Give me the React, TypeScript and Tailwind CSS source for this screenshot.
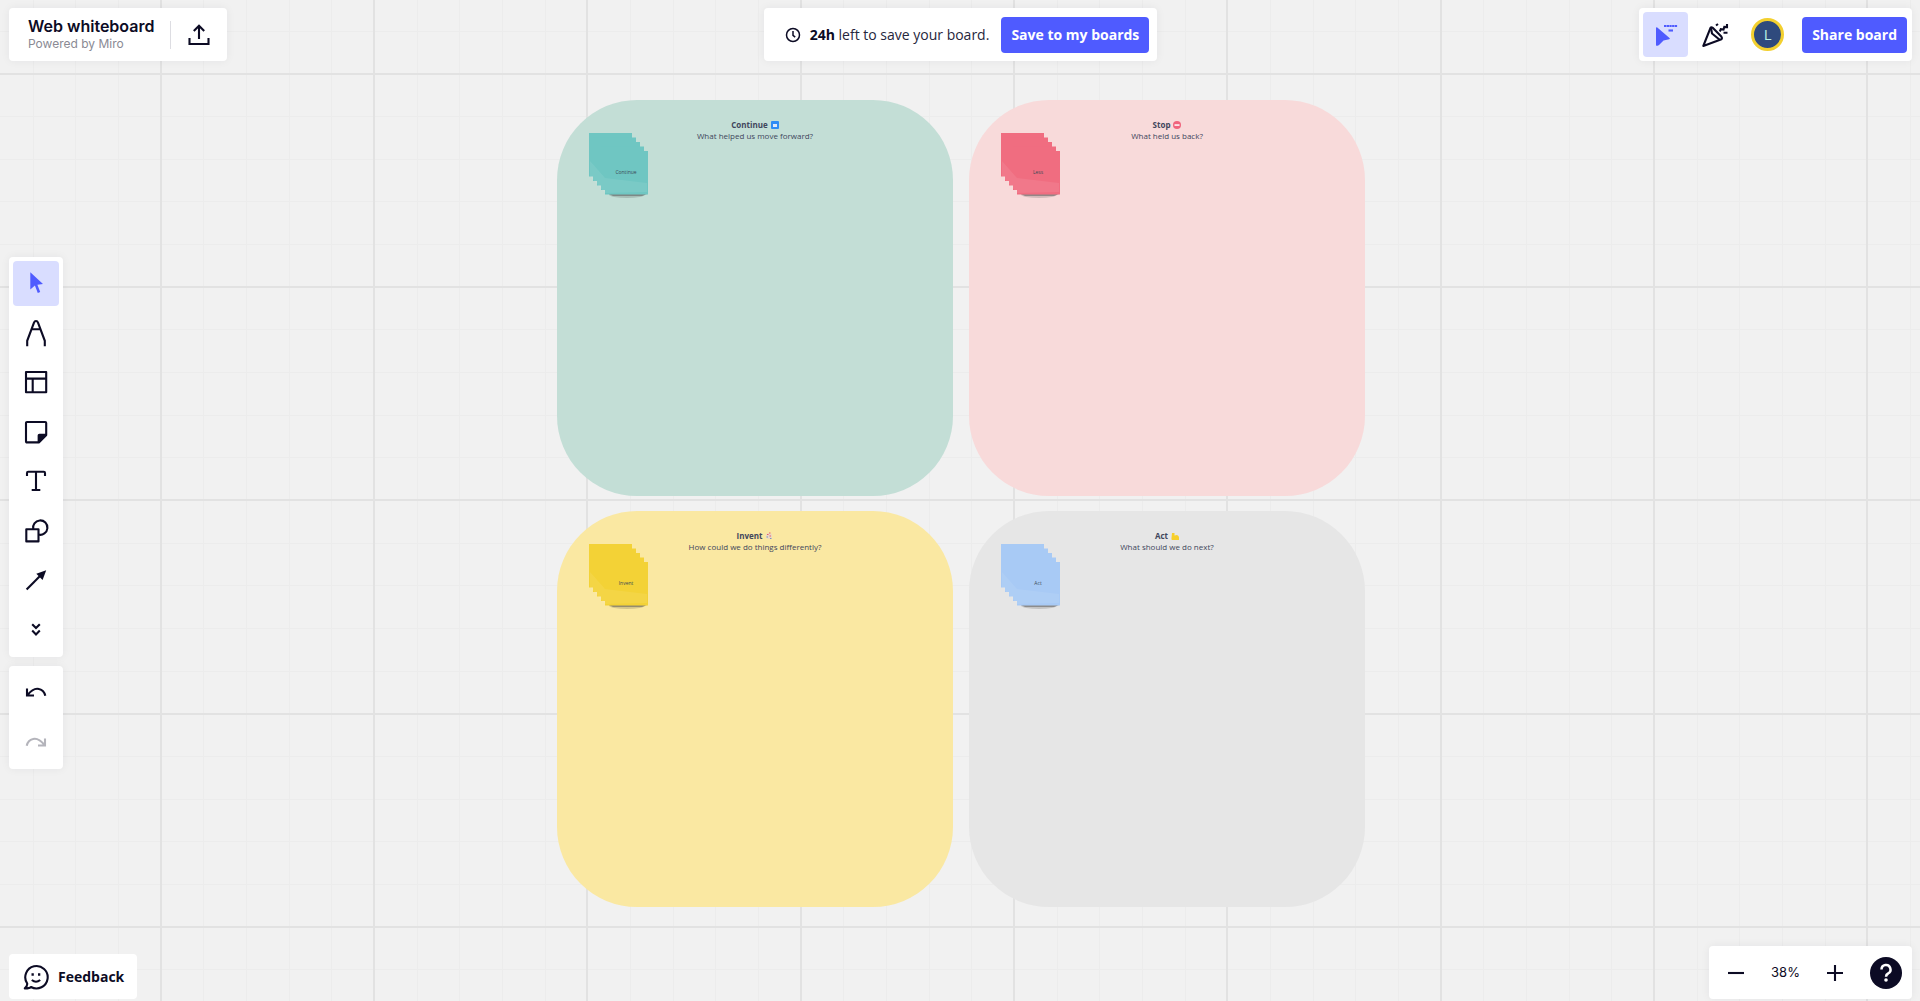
import type { ReactNode } from "react";

const GRID_STEP = 128 / 3;
const lines = Array.from({ length: 100 }, (_, i) => i);

function Grid() {
  return (
    <svg className="absolute inset-0 h-full w-full" aria-hidden="true">
      {/* Minor lines */}
      <g fill="#ececec">
        {lines.map((i) => (
          <rect key={`v${i}`} x={Math.floor(33 + i * GRID_STEP)} width="1" height="100%" />
        ))}
        {lines.map((i) => (
          <rect key={`h${i}`} y={Math.floor(31 + i * GRID_STEP)} width="100%" height="1" />
        ))}
      </g>
      {/* Major lines */}
      <g fill="#e2e2e2">
        {lines.map((i) => (
          <rect key={`v${i}`} x={Math.floor(160 + i * GRID_STEP * 5)} width="2" height="100%" />
        ))}
        {lines.map((i) => (
          <rect key={`h${i}`} y={Math.floor(73 + i * GRID_STEP * 5)} width="100%" height="2" />
        ))}
      </g>
    </svg>
  );
}

function Icon({ size = 28, children }: { size?: number; children: ReactNode }) {
  return (
    <svg
      width={size}
      height={size}
      viewBox={`0 0 ${size} ${size}`}
      fill="none"
      stroke="currentColor"
      strokeWidth="2.1"
      aria-hidden="true"
    >
      {children}
    </svg>
  );
}

const tools = [
  {
    name: "Select",
    icon: (
      <path
        d="M8.3 3.2 21 15l-5.6.8 2.8 7.2-2.4 1-2.9-7.4-4.6 4z"
        fill="currentColor"
        stroke="none"
      />
    ),
  },
  {
    name: "Pen",
    icon: (
      <path d="M5.2 27.2v-5.4L12 3.600q.6-1.600 2-1.600t2 1.600l6.800 18.200v5.400M10 10.200h8" />
    ),
  },
  {
    name: "Templates",
    icon: <path d="M4 4h20.2v20.2H4zM4 10.6h20.2M10.7 10.6v13.6" strokeLinejoin="round" />,
  },
  {
    name: "Sticky note",
    icon: (
      <>
        <path
          d="M5 4h18.2q1 0 1 1v12l-7.4 7.4H5q-1 0-1-1V5q0-1 1-1z"
          strokeLinejoin="round"
        />
        <path d="M15.6 25V17.6q0-1.8 1.8-1.8H25v1.6L17.4 25z" fill="currentColor" stroke="none" />
      </>
    ),
  },
  {
    name: "Text",
    icon: <path d="M5 9V6q0-1.2 1.2-1.2h15.6Q23 4.8 23 6v3M14 4.8V23M9.7 23h8.6" />,
  },
  {
    name: "Shapes",
    icon: (
      <>
        <path d="M4.3 12.2h12.2v12.2H4.3z" strokeLinejoin="round" />
        <path d="M11.2 12.2a7.2 7.2 0 1 1 5.3 5.4" />
      </>
    ),
  },
  {
    name: "Connection line",
    icon: (
      <>
        <path d="M4.6 23.5 18.5 9.6" />
        <path d="M24.2 4.2 20.6 14l-6.3-6.3z" fill="currentColor" stroke="none" />
      </>
    ),
  },
  {
    name: "More",
    icon: <path d="m10.2 8.2 3.8 3.8 3.8-3.8M10.2 14.6l3.8 3.8 3.8-3.800" />,
  },
];

const emojis = {
  forward: (
    <>
      <rect width="8" height="8" rx="1" fill="#2f8df5" />
      <path d="M2 3h4v3H2z" fill="#dfe9fb" />
    </>
  ),
  stop: (
    <>
      <circle cx="4" cy="4" r="4" fill="#f0647d" />
      <path d="M1.5 3.3h5v1.5h-5z" fill="#fff" />
    </>
  ),
  palette: (
    <>
      <circle cx="4" cy="4" r="3" fill="#ead9c4" />
      <path d="M2 2.5h1.5M4 1h1.5" stroke="#e85c6a" />
      <path d="M1.5 5H3M5 6.5h1.5" stroke="#7b93c4" />
      <path d="M4.5 4H6" stroke="#e85c6a" />
    </>
  ),
  muscle: <path d="M1 1h2.5v2.5L6 3q2 .5 2 2.500V8H1q-1-.5-.5-2z" fill="#f6cf2c" />,
};

type Section = {
  title: string;
  question: string;
  note: string;
  emoji: keyof typeof emojis;
  card: string;
  sticky: string;
};

const sections: Section[] = [
  {
    title: "Continue",
    question: "What helped us move forward?",
    note: "Continue",
    emoji: "forward",
    card: "bg-[#c3ded6]",
    sticky: "#6fc6c2",
  },
  {
    title: "Stop",
    question: "What held us back?",
    note: "Less",
    emoji: "stop",
    card: "bg-[#f8dada]",
    sticky: "#f06d80",
  },
  {
    title: "Invent",
    question: "How could we do things differently?",
    note: "Invent",
    emoji: "palette",
    card: "bg-[#fae8a2]",
    sticky: "#f3d236",
  },
  {
    title: "Act",
    question: "What should we do next?",
    note: "Act",
    emoji: "muscle",
    card: "bg-[#e6e6e6]",
    sticky: "#a8caf5",
  },
];

function StickyStack({ color, note }: { color: string; note: string }) {
  return (
    <div className="absolute top-[33px] left-8">
      <svg width="64" height="70" viewBox="0 0 64 70" aria-hidden="true">
        <ellipse cx="38" cy="61.5" rx="18" ry="3.5" fill="#000" opacity="0.15" />
        <path d="M20 61h38l-5 2H24z" fill="#555" opacity="0.5" />
        {[0, 1, 2, 3, 4].map((i) => (
          <rect key={i} x={i * 4} y={i * 4.5} width="43" height="43.5" fill={color} />
        ))}
        <path d="M1 28v15l15 17 42-1V50L16 45z" fill="#fff" opacity="0.08" />
      </svg>
      <span className="absolute top-[34px] left-[15px] w-11 text-center text-[5px] leading-[10px] text-[#3c4a55]">
        {note}
      </span>
    </div>
  );
}

function SectionCard({ section }: { section: Section }) {
  return (
    <section
      className={`relative size-[396px] rounded-[80px] pt-[19px] text-center text-[8px] leading-[11px] text-[#41465c] ${section.card}`}
    >
      <h2 className="flex items-center justify-center gap-[3px] font-bold">
        {section.title}
        <svg width="8" height="8" viewBox="0 0 8 8" fill="none" aria-hidden="true">
          {emojis[section.emoji]}
        </svg>
      </h2>
      <p>{section.question}</p>
      <StickyStack color={section.sticky} note={section.note} />
    </section>
  );
}

function Panel({ className, children }: { className: string; children: ReactNode }) {
  return (
    <div className={`flex rounded bg-white shadow-[0_0_10px_rgba(5,0,56,0.06)] ${className}`}>
      {children}
    </div>
  );
}

function App() {
  return (
    <div className="relative flex h-screen flex-col overflow-hidden bg-[#f1f1f1] font-['Open_Sans',sans-serif] text-[#0c0b24]">
      {/* Board */}
      <main className="absolute inset-0">
        <Grid />
        <div className="relative flex justify-center pt-[100px] pl-0.5">
          <div className="grid grid-cols-2 gap-x-4 gap-y-[15px]">
            {sections.map((section) => (
              <SectionCard key={section.title} section={section} />
            ))}
          </div>
        </div>
      </main>

      {/* Header */}
      <header className="relative grid grid-cols-[1fr_auto_1fr] items-start pt-2 pr-2 pl-[9px]">
        <Panel className="h-[53px] items-center justify-self-start pr-4 pl-[19px]">
          <div className="pb-0.5 font-['Inter',sans-serif]">
            <h1 className="text-[16px] leading-5 font-semibold">Web whiteboard</h1>
            <p className="text-[12px] leading-4 text-[#8a8a94]">Powered by Miro</p>
          </div>
          <div className="mx-4 h-7 w-px bg-[#dddde2]" />
          <button aria-label="Export board">
            <Icon size={24}>
              <path d="M2.5 15v6h19v-6M12 16V3M6.8 8 12 2.8 17.2 8" />
            </Icon>
          </button>
        </Panel>

        <Panel className="h-[53px] items-center pr-2 pl-[21px]">
          <Icon size={16}>
            <circle cx="8" cy="8" r="6.5" strokeWidth="1.5" />
            <path d="M8 4v4.3l2.2 1.8" strokeWidth="1.5" />
          </Icon>
          <p className="mr-3 ml-[9px] text-[14px] text-[#26263c]">
            <b className="text-[#0c0b24]">24h</b> left to save your board.
          </p>
          <button className="h-9 rounded bg-[#4f5bff] px-[10px] text-[14px] font-bold text-white">
            Save to my boards
          </button>
        </Panel>

        <Panel className="h-[53px] items-center justify-self-end pr-[5px] pl-1">
          <button
            aria-label="Hide collaborators' cursors"
            className="flex size-[45px] items-center justify-center rounded bg-[#d9ddff] text-[#4f5bff]"
          >
            <Icon>
              <path
                d="M4 7.2q0-1.6 1.3-.6L17.500 17q1 1-.3 1.200l-5.700 1.200-4.500 4.700q-1.200 1.200-3 .4z"
                fill="currentColor"
                stroke="none"
              />
              <path d="M12 5h13.500" strokeDasharray="2.300 .4" />
              <path d="M16.500 9.500H21" />
            </Icon>
          </button>
          <button aria-label="Reactions" className="ml-[13px]">
            <Icon>
              <path
                d="M2.300 25 9.500 6.800q.8-1.200 2.200 0l8.600 8.800q1.500 2-.5 3z"
                strokeLinejoin="round"
              />
              <path d="m10 7 1 5.500 8 6.500" strokeLinejoin="round" />
              <path d="m18.800 10.500 1-2.300 2.700.3.800-2.600 2.700.2V3M15 4.500l2-1.500M22.500 11.800h4" />
            </Icon>
          </button>
          <button
            aria-label="Account"
            className="ml-[22px] size-[33px] rounded-full border-[3px] border-[#f3d02f] bg-[#2f4a7d] text-[15px] leading-[27px] text-[#b7f0e4]"
          >
            L
          </button>
          <button className="ml-[18px] h-9 rounded bg-[#4f5bff] px-[10px] text-[14px] font-bold text-white">
            Share board
          </button>
        </Panel>
      </header>

      {/* Toolbar */}
      <aside className="relative flex flex-1 flex-col items-start justify-center gap-[9px] self-start pt-[18px] pl-[9px]">
        <Panel className="h-[400px] flex-col justify-between p-1">
          {tools.map((tool, i) => (
            <button
              key={tool.name}
              aria-label={tool.name}
              className={`flex h-[45px] w-[46px] items-center justify-center rounded ${
                i === 0 ? "bg-[#d9ddff] text-[#4f5bff]" : ""
              }`}
            >
              <Icon>{tool.icon}</Icon>
            </button>
          ))}
        </Panel>
        <Panel className="flex-col gap-[5px] p-1">
          <button
            aria-label="Undo"
            className="flex h-[45px] w-[46px] items-center justify-center"
          >
            <Icon>
              <path d="M5 10.5v7h7M5.500 17q6-7.500 11.500-6 5 1 6.300 6.800" />
            </Icon>
          </button>
          <button
            aria-label="Redo"
            disabled
            className="flex h-[45px] w-[46px] items-center justify-center text-[#b4b4bb]"
          >
            <Icon>
              <path d="M23 10.500v7h-7M22.500 17q-6-7.500-11.500-6-5 1-6.300 6.800" />
            </Icon>
          </button>
        </Panel>
      </aside>

      {/* Footer */}
      <footer className="relative flex items-end justify-between pr-2 pb-0.5 pl-[9px]">
        <button className="flex h-[45px] items-center gap-2 rounded bg-white px-[13px] text-[14px] font-bold">
          <Icon>
            <path
              d="M5.200 20.500A11.200 11.200 0 1 1 9 24q-1 1.300-6.200 1.400 2.700-2.300 2.400-4.900z"
              strokeLinejoin="round"
            />
            <path d="M9.500 11.500h2.300M16 11.500h2.300" strokeWidth="2.300" />
            <path d="M9.800 17q4.200 3.500 8.400 0" />
          </Icon>
          Feedback
        </button>

        <Panel className="h-[53px] items-center pr-[10px] pl-[15px]">
          <button aria-label="Zoom out">
            <Icon size={24}>
              <path d="M4 12h16" />
            </Icon>
          </button>
          <span className="w-[75px] text-center font-['Inter',sans-serif] text-[13px]">38%</span>
          <button aria-label="Zoom in">
            <Icon size={24}>
              <path d="M4 12h16M12 4v16" />
            </Icon>
          </button>
          <button
            aria-label="Help"
            className="ml-[23px] flex size-8 items-center justify-center rounded-full bg-[#0c0b24] text-white"
          >
            <Icon size={24}>
              <path
                d="M7.500 8.500a4.500 4.500 0 1 1 6.600 4q-2.100 1-2.100 3.300"
                strokeWidth="2.500"
              />
              <circle cx="12" cy="19" r="1.800" fill="currentColor" stroke="none" />
            </Icon>
          </button>
        </Panel>
      </footer>
    </div>
  );
}

export default App;
